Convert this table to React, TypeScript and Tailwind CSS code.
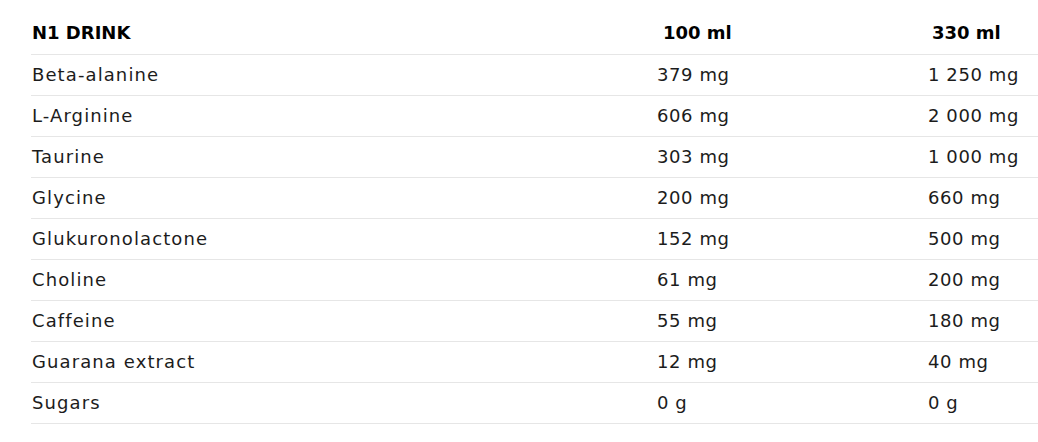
const rows: [string, string, string][] = [
  ["Beta-alanine", "379 mg", "1 250 mg"],
  ["L-Arginine", "606 mg", "2 000 mg"],
  ["Taurine", "303 mg", "1 000 mg"],
  ["Glycine", "200 mg", "660 mg"],
  ["Glukuronolactone", "152 mg", "500 mg"],
  ["Choline", "61 mg", "200 mg"],
  ["Caffeine", "55 mg", "180 mg"],
  ["Guarana extract", "12 mg", "40 mg"],
  ["Sugars", "0 g", "0 g"],
];

export default function App() {
  return (
    <div
      className="w-[1038px] h-[442px] bg-white pt-[14px] pl-[31px] text-[#1c1c1c]"
      style={{ fontFamily: '"DejaVu Sans", "Noto Sans", sans-serif' }}
    >
      <div className="grid grid-cols-[626px_271px_110px] h-[41px] pb-[3px] border-b border-[#e6e6e6] items-center text-[18px] font-bold text-black">
        <div className="pl-px">N1 DRINK</div>
        <div className="pl-[6px]">100 ml</div>
        <div className="pl-[4px]">330 ml</div>
      </div>
      {rows.map(([name, a, b]) => (
        <div
          key={name}
          className="grid grid-cols-[626px_271px_110px] h-[41px] pb-[2px] border-b border-[#e6e6e6] items-center text-[18px]"
        >
          <div className="pl-px tracking-[1.1px]">{name}</div>
          <div className="tracking-[0.6px]">{a}</div>
          <div className="tracking-[0.6px]">{b}</div>
        </div>
      ))}
    </div>
  );
}
